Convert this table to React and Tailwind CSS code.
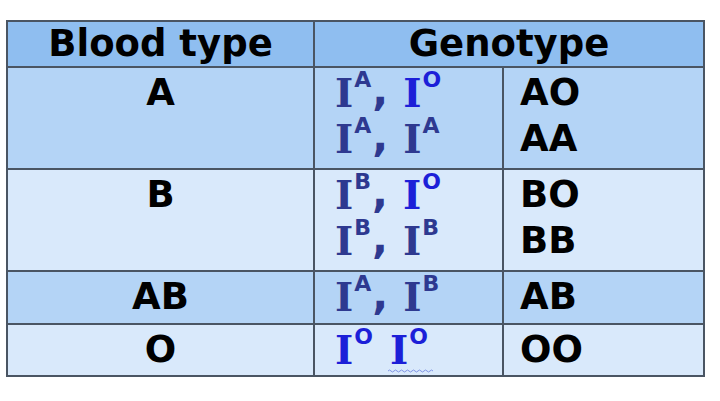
import React from 'react';

const sans = { fontFamily: '"DejaVu Sans", Verdana, sans-serif' };
const serif = { fontFamily: '"DejaVu Serif", Georgia, serif' };

const DARK = 'text-[#2e3990]';
const BLUE = 'text-[#1c1fd8]';

function Allele({ sup, blue, wavy }) {
    const color = blue ? BLUE : DARK;
    return (
        <span className={`relative inline-block ${color}`}>
            <span className="text-[39px] font-bold" style={serif}>I</span>
            <sup className="text-[22px] font-bold ml-[1px] -top-[20px]" style={sans}>{sup}</sup>
            {wavy && (
                <svg className="absolute left-[-2px] top-[42px]" width="46" height="4" viewBox="0 0 46 4">
                    <path d="M0 2 Q1.5 0 3 2 T6 2 T9 2 T12 2 T15 2 T18 2 T21 2 T24 2 T27 2 T30 2 T33 2 T36 2 T39 2 T42 2 T45 2" fill="none" stroke="#8094e4" strokeWidth="1" />
                </svg>
            )}
        </span>
    );
}

function Pair({ a, b, comma = true, wavy = false }) {
    return (
        <div className="h-[46px] leading-[46px] text-[37px] whitespace-nowrap overflow-visible" style={sans}>
            <Allele sup={a.s} blue={a.blue} />
            {comma ? (
                <span className={`relative inline-block ${DARK} text-[42px] font-bold ml-[1px] mr-[15px] top-[-2px]`} style={sans}>,</span>
            ) : (
                <span className="inline-block w-[17px]" />
            )}
            <Allele sup={b.s} blue={b.blue} wavy={wavy} />
        </div>
    );
}

const rows = [
    {
        type: 'A',
        bg: 'bg-[#b4d4f6]',
        pairs: [
            { a: { s: 'A' }, b: { s: 'O', blue: true } },
            { a: { s: 'A' }, b: { s: 'A' } }
        ],
        codes: ['AO', 'AA'],
        h: 'h-[102px]'
    },
    {
        type: 'B',
        bg: 'bg-[#d9e9fb]',
        pairs: [
            { a: { s: 'B' }, b: { s: 'O', blue: true } },
            { a: { s: 'B' }, b: { s: 'B' } }
        ],
        codes: ['BO', 'BB'],
        h: 'h-[102px]'
    },
    {
        type: 'AB',
        bg: 'bg-[#b4d4f6]',
        pairs: [{ a: { s: 'A' }, b: { s: 'B' } }],
        codes: ['AB'],
        h: 'h-[53px]'
    },
    {
        type: 'O',
        bg: 'bg-[#d9e9fb]',
        pairs: [{ a: { s: 'O', blue: true }, b: { s: 'O', blue: true }, comma: false, wavy: true }],
        codes: ['OO'],
        h: 'h-[52px]'
    }
];

export default function App() {
    return (
        <div className="w-[720px] h-[401px] bg-white pt-[20px] pl-[6px]">
            <table className="table-fixed border-collapse w-[697px] text-black" style={sans}>
                <colgroup>
                    <col className="w-[307px]" />
                    <col className="w-[189px]" />
                    <col className="w-[201px]" />
                </colgroup>
                <thead>
                    <tr className="h-[46px] bg-[#8fbef0]">
                        <th className="border-2 border-[#4a5563] text-[37px] font-bold leading-[42px] p-0 text-center">Blood type</th>
                        <th colSpan={2} className="border-2 border-[#4a5563] text-[37px] font-bold leading-[42px] p-0 text-center">Genotype</th>
                    </tr>
                </thead>
                <tbody>
                    {rows.map((r) => (
                        <tr key={r.type} className={`${r.bg} ${r.h}`}>
                            <td className="border-2 border-[#4a5563] align-top text-center p-0 pt-[2px]">
                                <div className="h-[46px] text-[37px] font-bold leading-[46px]">{r.type}</div>
                            </td>
                            <td className="border-2 border-[#4a5563] align-top p-0 pt-[2px] pl-[20px]">
                                {r.pairs.map((p, i) => (
                                    <Pair key={i} a={p.a} b={p.b} comma={p.comma !== false} wavy={p.wavy} />
                                ))}
                            </td>
                            <td className="border-2 border-[#4a5563] align-top p-0 pt-[2px] pl-[16px]">
                                {r.codes.map((c) => (
                                    <div key={c} className="h-[46px] text-[37px] font-bold leading-[46px]">{c}</div>
                                ))}
                            </td>
                        </tr>
                    ))}
                </tbody>
            </table>
        </div>
    );
}
